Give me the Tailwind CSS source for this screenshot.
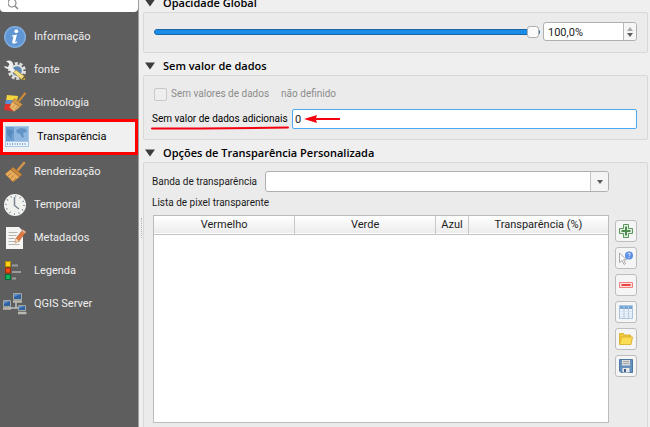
<!DOCTYPE html>
<html lang="pt">

<head>
    <meta charset="UTF-8">
    <meta name="viewport" content="width=device-width, initial-scale=1.0">
    <title>Propriedades da camada</title>
    <script src="https://cdn.jsdelivr.net/npm/@tailwindcss/browser@4"></script>
</head>

<body class="flex h-screen overflow-hidden bg-[#efefef] font-[Roboto,'Noto_Sans',sans-serif] text-[10px] leading-4 text-[#1c1c1c]">
    <!-- Sidebar -->
    <aside class="w-[139px] shrink-0 border-r border-[#a0a0a0] bg-[#5e5e5e]">
        <label class="flex h-3 items-end rounded-b-sm bg-white pl-2">
            <svg class="size-3 shrink-0" viewBox="0 0 12 12" fill="none" stroke="#8c8c8c" stroke-width="1.2">
                <circle cx="4" cy="3" r="4" />
                <path d="M7 6l3 3" stroke-width="1.600" />
            </svg>
            <input type="search" aria-label="Buscar" class="h-3 w-full outline-none">
        </label>

        <nav class="pt-2 text-[11px] text-[#eeeeee]">
            <a href="#" class="flex h-[33px] items-center gap-2 pl-1">
                <svg class="size-[22px]" viewBox="0 0 22 22">
                    <circle cx="11" cy="11" r="11" fill="#7fade0" />
                    <circle cx="11" cy="11" r="9.500" fill="#5f96d3" />
                    <circle cx="12.300" cy="5.200" r="1.900" fill="#fff" />
                    <path d="M8 9.500l5-1-1.800 7q0 1 2-.3l-.4 1.500q-5.500 2.500-4.500-1.500l1.200-4.600-1.700-.2z" fill="#fff" />
                </svg>
                Informação
            </a>
            <a href="#" class="flex h-[33px] items-center gap-2 pl-1">
                <svg class="size-[22px]" viewBox="0 0 22 22">
                    <circle cx="13" cy="12" r="7.500" fill="none" stroke="#dedede" stroke-width="3" stroke-dasharray="3 1.700" />
                    <circle cx="13" cy="12" r="6.500" fill="#e4e4e4" />
                    <circle cx="13" cy="12" r="4.800" fill="#5c86b5" />
                    <path d="M2 2q6-2 7 3 0 2-1 3l4 4-3 2-4-4q-4 0-5-3l4 1 1.500-3z" fill="#f1f1f1" />
                    <path d="M9.500 13.500l2.500-2.500 8.500 6.500.5 3.500-3.500-.5z" fill="#f3dc86" stroke="#a58a35" stroke-width=".7" />
                    <path d="M18 20.500l3-3" stroke="#6d5a1d" stroke-width="1.200" />
                </svg>
                fonte
            </a>
            <a href="#" class="flex h-[33px] items-center gap-2 pl-1">
                <svg class="size-[22px]" viewBox="0 0 22 22">
                    <path d="M3 3l11 1-1 5H2z" fill="#f4d63c" />
                    <path d="M2 8h11l-1 5H1z" fill="#5a8fd0" />
                    <path d="M1 12h9l2 5-4 2-8-1z" fill="#e2312c" />
                    <path d="M21 1.500l-6.500 8" stroke="#c98a3c" stroke-width="2.200" stroke-linecap="round" />
                    <path d="M10.500 6.500l8 6-2.500 2.500-8-5.500z" fill="#d39a4e" stroke="#9a6424" stroke-width=".5" />
                    <path d="M8 9.500l8 5.500-6 4.500-4.500-4z" fill="#ecb66b" stroke="#a87030" stroke-width=".5" />
                    <path d="M8 16l3-3.500M10.500 17.500l3-3" stroke="#a87030" stroke-width=".6" />
                </svg>
                Simbologia
            </a>
            <a href="#" aria-current="page" class="flex h-9 items-center gap-2 border-[3px] border-[#ff0000] bg-[#f0f0f0] pl-0.5 text-black">
                <svg class="size-6" viewBox="0 0 24 24">
                    <rect x="0" y="1" width="24" height="21" fill="#a9c9e6" />
                    <rect x="1" y="2" width="22" height="14" fill="#8db7de" />
                    <rect x="1" y="2" width="8" height="14" fill="#6c9fd0" />
                    <path d="M2 4l5 1 2 2-2 2-1 5-2-3-2-2zM11 5l5-2 5 1 1 3-4 1 1 4-2 1-2-4-3-1z" fill="#4a7fb5" opacity=".6" />
                    <rect x="1" y="17" width="22" height="4" fill="#eaf2fa" />
                    <path d="M2 19h20" stroke="#5b8cc0" stroke-width="1.500" stroke-dasharray="1 1.500" />
                </svg>
                Transparência
            </a>
            <a href="#" class="flex h-[33px] items-center gap-2 pl-1">
                <svg class="size-[22px]" viewBox="0 0 22 22">
                    <path d="M20 2l-6 7" stroke="#d0924a" stroke-width="2.600" stroke-linecap="round" />
                    <path d="M9 6l9 7.500-2.500 2.500-9-7.500z" fill="#c98a40" stroke="#8f5d20" stroke-width=".5" />
                    <path d="M6.500 8.500l9 7.500-6.500 5-8-8z" fill="#e8ab5c" stroke="#9c6a2b" stroke-width=".5" />
                    <path d="M4 15l3.500-3M6.500 17.500l3.500-3.200M9 20l3-3" stroke="#a87030" stroke-width=".7" />
                </svg>
                Renderização
            </a>
            <a href="#" class="flex h-[33px] items-center gap-2 pl-1">
                <svg class="size-[22px]" viewBox="0 0 22 22" fill="none">
                    <circle cx="11" cy="11" r="11" fill="#f1f1ee" />
                    <circle cx="11" cy="11" r="9" stroke="#6f8499" stroke-width="1.600" stroke-dasharray="1 3.710" />
                    <path d="M10.500 3v8.500l4.500 3.500" stroke="#7c8791" stroke-width="1.500" />
                </svg>
                Temporal
            </a>
            <a href="#" class="flex h-[33px] items-center gap-2 pl-1">
                <svg class="size-[22px]" viewBox="0 0 22 22">
                    <path d="M2 0h13l4 4v18H2z" fill="#f5f5f3" />
                    <path d="M4.500 5.500h9M4.500 8.500h8M4.500 11.500h6M4.500 14.500h11M4.500 17.500h11" stroke="#b3b3b0" />
                    <path d="M19 2.500l3 2.500-7 9-4 2 1-4.500z" fill="#e07a43" stroke="#a34c1e" stroke-width=".5" />
                    <path d="M12 11.500l3 2.500-4 2z" fill="#f1d9b5" />
                    <path d="M19 2.500l3 2.500-1.200 1.500-3-2.500z" fill="#d9b1a0" />
                </svg>
                Metadados
            </a>
            <a href="#" class="flex h-[33px] items-center gap-2 pl-1">
                <svg class="size-[22px]" viewBox="0 0 22 22">
                    <path d="M8 5.500h6M8 12h9M8 18.500h4" stroke="#9b9b9b" stroke-width="1.800" />
                    <rect x="1.500" y="1.500" width="5" height="5" fill="#ffd21c" stroke="#b78d00" />
                    <rect x="1.500" y="8" width="5" height="5" fill="#f04a12" stroke="#9d2a00" />
                    <rect x="1.500" y="14.500" width="5" height="5" fill="#17b060" stroke="#006b34" />
                </svg>
                Legenda
            </a>
            <a href="#" class="flex h-[33px] items-center gap-2 pl-1">
                <svg class="size-[22px]" viewBox="0 0 22 22" overflow="visible">
                    <path d="M4 15h14M12 9v6" stroke="#bfc3c2" stroke-width="1.500" />
                    <path d="M9.500.5h8v6h-8zM-.5 7.500h7v6h-7zM14.500 12.500h7v5h-7z" fill="#2f62a4" stroke="#a3a89f" />
                    <path d="M10 1h7l-7 3zM0 8h6l-6 3zM15 13h6l-6 2.500z" fill="#5f8cc4" />
                    <path d="M9 8.500h9M-1 15.500h8M14 20h8.500" stroke="#b9b9b0" stroke-width="2.500" />
                </svg>
                QGIS Server
            </a>
        </nav>
    </aside>

    <!-- Splitter handle -->
    <div class="flex w-1 shrink-0 items-center justify-center pt-7">
        <span class="h-5 border-l border-dotted border-[#b4b4b4]"></span>
    </div>

    <!-- Transparency page, scrolled so that its first heading meets the top edge -->
    <main class="-mt-[10px] mr-[2px] flex min-w-0 grow flex-col">
        <h2 class="flex h-[22px] shrink-0 items-center gap-2 pt-1 pl-0.5 font-['Open_Sans','Noto_Sans',sans-serif] text-[11px] font-semibold text-black">
            <svg class="h-2 w-2.5" viewBox="0 0 10 8"><path d="M0 .5h10L5 7.500z" fill="#3c3c3c" /></svg>
            Opacidade Global
        </h2>
        <section class="flex h-[41px] shrink-0 items-center gap-[3px] rounded-xs border border-[#d8d8d8] bg-[#ebebeb] px-2.5 pb-0.5">
            <input type="range" min="0" max="100" value="100" aria-label="Opacidade"
                class="h-4 min-w-0 grow appearance-none bg-transparent [&::-webkit-slider-runnable-track]:h-[6px] [&::-webkit-slider-runnable-track]:rounded-full [&::-webkit-slider-runnable-track]:border [&::-webkit-slider-runnable-track]:border-[#1467ab] [&::-webkit-slider-runnable-track]:bg-[#1a8ce6] [&::-webkit-slider-thumb]:-mt-1 [&::-webkit-slider-thumb]:size-3 [&::-webkit-slider-thumb]:appearance-none [&::-webkit-slider-thumb]:rounded-[3px] [&::-webkit-slider-thumb]:border [&::-webkit-slider-thumb]:border-[#b0b0b0] [&::-webkit-slider-thumb]:bg-[#fafafa]">
            <div class="flex h-[19px] w-[94px] rounded-[3px] border border-[#b0b0b0] bg-white">
                <input type="text" value="100,0%" aria-label="Opacidade em porcentagem" class="w-0 grow pt-0.5 pl-1 text-[11px] outline-none">
                <div class="flex w-[13px] flex-col rounded-r-[3px] border-l border-[#b8b8b8] bg-[#f6f6f6]">
                    <button type="button" aria-label="Aumentar" class="flex grow items-end justify-center pb-px">
                        <svg class="h-1 w-1.5" viewBox="0 0 6 4"><path d="M0 4l3-4 3 4z" fill="#a9a9a9" /></svg>
                    </button>
                    <button type="button" aria-label="Diminuir" class="flex grow items-start justify-center pt-px">
                        <svg class="h-1 w-1.5" viewBox="0 0 6 4"><path d="M0 0h6L3 4z" fill="#5c5c5c" /></svg>
                    </button>
                </div>
            </div>
        </section>

        <h2 class="flex h-[22px] shrink-0 items-center gap-2 pt-1 pl-0.5 font-['Open_Sans','Noto_Sans',sans-serif] text-[11px] font-semibold text-black">
            <svg class="h-2 w-2.5" viewBox="0 0 10 8"><path d="M0 .5h10L5 7.500z" fill="#3c3c3c" /></svg>
            Sem valor de dados
        </h2>
        <section class="shrink-0 rounded-xs border border-[#d8d8d8] bg-[#ebebeb] pt-2.5 pr-2.5 pb-2.5 pl-2">
            <div class="mb-[7px] flex items-center text-[#8c8c8c]">
                <input type="checkbox" id="nodata" disabled class="mr-1 ml-0.5 size-[13px] appearance-none rounded-xs border border-[#c8c8c8] bg-[#eeeeee]">
                <label for="nodata">Sem valores de dados</label>
                <span class="ml-3">não definido</span>
            </div>
            <div class="flex items-center gap-1">
                <label for="extra" class="relative w-[136px] shrink-0 whitespace-nowrap text-black">
                    Sem valor de dados adicionais
                    <svg class="absolute top-[15px] -left-px h-1 w-[138px]" viewBox="0 0 138 4" fill="none"><path d="M1 2.500q60 0 136-1" stroke="#f5000f" stroke-width="2" stroke-linecap="round" /></svg>
                </label>
                <div class="relative flex grow">
                    <input type="text" id="extra" value="0" class="h-5 w-full rounded-xs border border-[#4eaaf0] bg-white px-0.5 text-[11px] outline-none">
                    <svg class="absolute top-1.5 left-3 h-2 w-[36px]" viewBox="0 0 36 8"><path d="M0 4l13-4-1 3h24v2H12l1 3z" fill="#f5000f" /></svg>
                </div>
            </div>
        </section>

        <h2 class="flex h-[22px] shrink-0 items-center gap-2 pt-1 pl-0.5 font-['Open_Sans','Noto_Sans',sans-serif] text-[11px] font-semibold text-black">
            <svg class="h-2 w-2.5" viewBox="0 0 10 8"><path d="M0 .5h10L5 7.500z" fill="#3c3c3c" /></svg>
            Opções de Transparência Personalizada
        </h2>
        <section class="flex grow gap-1.5 rounded-t-xs border border-b-0 border-[#d8d8d8] bg-[#ebebeb] pt-2 pr-2.5 pb-1 pl-2">
            <div class="flex min-w-0 grow flex-col">
                <div class="flex items-center">
                    <label for="band" class="w-[113px] shrink-0">Banda de transparência</label>
                    <div class="relative grow">
                        <select id="band" class="block h-[21px] w-full appearance-none rounded-[3px] border border-[#b0b0b0] bg-white px-1"><option></option></select>
                        <span class="pointer-events-none absolute inset-y-px right-px flex w-[18px] items-center justify-center rounded-r-xs border-l border-[#c4c4c4] bg-[#f4f4f4]">
                            <svg class="h-1 w-1.5" viewBox="0 0 6 4"><path d="M0 0h6L3 4z" fill="#5c5c5c" /></svg>
                        </span>
                    </div>
                </div>
                <p class="mt-[3px] mb-1">Lista de pixel transparente</p>
                <div class="ml-px grow border border-[#bcbcbc] bg-white">
                    <table class="w-full table-fixed border-collapse text-[11px]">
                        <thead>
                            <tr class="h-[18px] border-b border-[#c4c4c4] bg-linear-to-b from-white to-[#ececec]">
                                <th class="w-[31%] border-r border-[#c8c8c8] font-normal">Vermelho</th>
                                <th class="w-[31%] border-r border-[#c8c8c8] font-normal">Verde</th>
                                <th class="w-[33px] border-r border-[#c8c8c8] font-normal">Azul</th>
                                <th class="font-normal">Transparência (%)</th>
                            </tr>
                        </thead>
                    </table>
                </div>
            </div>

            <div class="flex shrink-0 flex-col gap-[5px] pt-[49px]">
                <button type="button" aria-label="Adicionar" class="flex size-[22px] items-center justify-center rounded-[3px] border border-[#bdbdbd] bg-[#f5f5f5]">
                    <svg class="size-3.5" viewBox="0 0 14 14"><path d="M4.500.5h5v4h4v5h-4v4h-5v-4h-4v-5h4z" fill="#e3efe2" stroke="#5b965b" /><path d="M7 2.500v9M2.500 7h9" stroke="#4b8b4c" stroke-width="2" /></svg>
                </button>
                <button type="button" aria-label="Adicionar pela tela" class="flex size-[22px] items-center justify-center rounded-[3px] border border-[#bdbdbd] bg-[#f5f5f5]">
                    <svg class="size-3.5" viewBox="0 0 14 14" fill="none"><path d="M.5 2v9.500l2.500-2 2 4 1.500-1-2-3.700h3z" fill="#fff" stroke="#a8a8a8" /><circle cx="10" cy="4.500" r="4" fill="#5c8fe6" /><path d="M8.800 3.500q0-1.200 1.300-1.200t1.200 1.100-1.200 1.700M10 6v1" stroke="#e6eefc" /></svg>
                </button>
                <button type="button" aria-label="Remover" class="flex size-[22px] items-center justify-center rounded-[3px] border border-[#bdbdbd] bg-[#f5f5f5]">
                    <svg class="size-3.5" viewBox="0 0 14 14"><path d="M.5 4.500h13v5H.5z" fill="#fce0e0" stroke="#f08080" /><path d="M2.500 7h9" stroke="#e84545" stroke-width="2" /></svg>
                </button>
                <button type="button" aria-label="Valores padrão" class="flex size-[22px] items-center justify-center rounded-[3px] border border-[#bdbdbd] bg-[#f5f5f5]">
                    <svg class="size-3.5" viewBox="0 0 14 14"><path d="M.5.500h13v13H.5z" fill="#eef4fa" stroke="#a9c4de" /><path d="M1 1h12v3H1z" fill="#78a5d2" /><path d="M5 1v12M9.500 1v12" stroke="#a9c4de" /><path d="M1 6.500h12M1 9h12M1 11.500h12" stroke="#cfdfee" stroke-width=".8" /></svg>
                </button>
                <button type="button" aria-label="Importar" class="flex size-[22px] items-center justify-center rounded-[3px] border border-[#bdbdbd] bg-[#f5f5f5]">
                    <svg class="size-3.5" viewBox="0 0 14 14"><path d="M.5 12.500v-11h4l1 1.500h6v2" fill="#f0c93c" stroke="#d5a822" stroke-width=".8" /><path d="M.5 12.500L2.500 5H13.500l-1.500 7.500z" fill="#fbdc55" stroke="#d5a822" stroke-width=".8" /></svg>
                </button>
                <button type="button" aria-label="Exportar" class="flex size-[22px] items-center justify-center rounded-[3px] border border-[#bdbdbd] bg-[#f5f5f5]">
                    <svg class="size-3.5" viewBox="0 0 14 14"><path d="M.5.500h13v13H2L.5 12z" fill="#6690bd" stroke="#4f779f" /><path d="M3 1h8v5.500H3z" fill="#dcdcdc" /><path d="M4 2.500h6M4 4.500h6" stroke="#a5a5a5" /><path d="M3.500 9h7v4.500h-7z" fill="#e8e8e8" /><path d="M5 10h2v3H5z" fill="#3f5f85" /></svg>
                </button>
            </div>
        </section>
    </main>
</body>

</html>
